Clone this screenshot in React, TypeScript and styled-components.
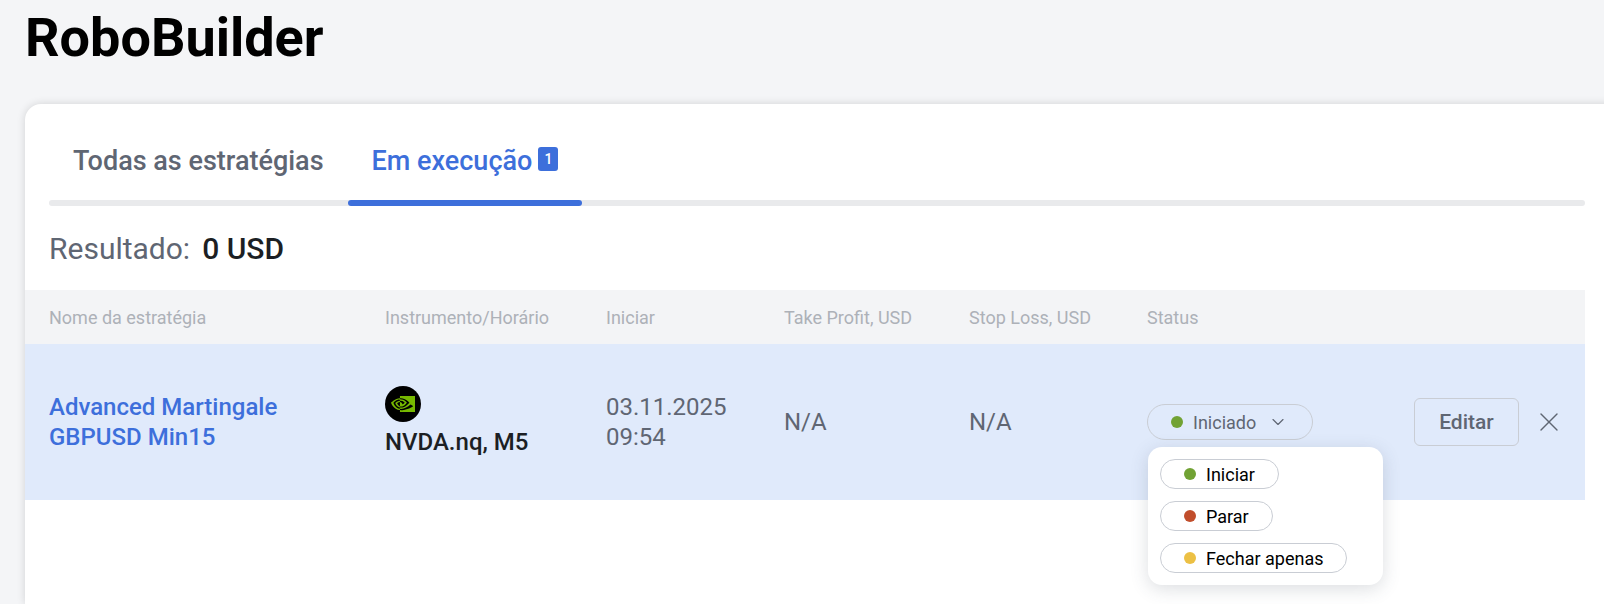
import React from 'react';
import styled, { createGlobalStyle } from 'styled-components';
import { FiChevronDown, FiX } from 'react-icons/fi';
import { SiNvidia } from 'react-icons/si';

const GlobalStyle = createGlobalStyle`
  html, body {
    margin: 0;
    padding: 0;
    width: 1604px;
    height: 604px;
    overflow: hidden;
    background: #f4f5f7;
    font-family: Roboto, "Liberation Sans", sans-serif;
  }
`;

const Page = styled.div`
  width: 1604px;
  height: 604px;
  padding-left: 25px;
  box-sizing: border-box;
  overflow: hidden;
`;

const PageTitle = styled.h1`
  margin: 0;
  height: 104px;
  font-size: 54px;
  line-height: 76px;
  font-weight: 700;
  color: #000;
`;

const Card = styled.div`
  width: 1640px;
  height: 500px;
  background: #fff;
  border-radius: 16px 0 0 0;
  box-shadow: 0 0 8px rgba(0, 0, 0, 0.14);
`;

const Content = styled.div`
  width: 1560px;
`;

const Tabs = styled.div`
  position: relative;
  display: flex;
  margin-left: 24px;
  height: 102px;

  &::after {
    content: '';
    position: absolute;
    left: 0;
    right: 0;
    bottom: 0;
    height: 6px;
    border-radius: 3px;
    background: #e9eaec;
  }
`;

const Tab = styled.div<{ $active?: boolean }>`
  position: relative;
  display: flex;
  align-items: center;
  height: 102px;
  padding: 12px 24px 0;
  box-sizing: border-box;
  font-size: 27px;
  font-weight: 500;
  color: ${({ $active }) => ($active ? '#3d6fdb' : '#5f6673')};

  &::after {
    content: '';
    display: ${({ $active }) => ($active ? 'block' : 'none')};
    position: absolute;
    left: 0;
    right: 0;
    bottom: 0;
    height: 6px;
    border-radius: 3px;
    background: #3d6fdb;
    z-index: 1;
  }
`;

const Count = styled.span`
  display: inline-flex;
  align-items: center;
  justify-content: center;
  width: 20px;
  height: 24px;
  margin: -4px 0 0 6px;
  border-radius: 3px;
  background: #3d6fdb;
  color: #fff;
  font-size: 14px;
`;

const Result = styled.div`
  display: flex;
  align-items: center;
  gap: 12px;
  height: 84px;
  padding-left: 24px;
  box-sizing: border-box;
  font-size: 30px;
  color: #5f6673;
`;

const ResultValue = styled.span`
  font-weight: 500;
  color: #1c1f24;
`;

const TableRow = styled.div`
  display: grid;
  grid-template-columns: 336px 221px 178px 185px 178px 267px 1fr;
  padding-left: 24px;
  align-items: center;
`;

const HeadRow = styled(TableRow)`
  height: 54px;
  background: #f3f4f6;
  font-size: 18px;
  color: #adb1b8;
`;

const BodyRow = styled(TableRow)`
  height: 156px;
  background: #e0eafb;
  font-size: 24px;
  color: #5f6673;
`;

const StrategyName = styled.div`
  font-size: 24px;
  font-weight: 500;
  line-height: 30px;
  color: #3d6fdb;
`;

const Instrument = styled.div`
  display: flex;
  flex-direction: column;
  gap: 6px;
  margin-bottom: 2px;
  font-size: 24px;
  line-height: 28px;
  font-weight: 500;
  color: #1c1f24;
`;

const LogoBadge = styled.div`
  display: flex;
  align-items: center;
  justify-content: center;
  width: 36px;
  height: 36px;
  border-radius: 50%;
  background: #000;
  color: #76b900;
`;

const DateCell = styled.div`
  line-height: 30px;
`;

const StatusCell = styled.div`
  position: relative;
`;

const StatusPill = styled.div`
  display: flex;
  align-items: center;
  width: 166px;
  height: 36px;
  padding-left: 23px;
  box-sizing: border-box;
  border: 1px solid #c9cdd4;
  border-radius: 18px;
  font-size: 18px;
  color: #5f6673;
`;

const Dot = styled.span<{ $color: string }>`
  width: 12px;
  height: 12px;
  border-radius: 50%;
  background: ${({ $color }) => $color};
  margin-right: 10px;
  flex: none;
`;

const Chevron = styled(FiChevronDown)`
  margin-left: 12px;
  color: #5f6673;
`;

const Menu = styled.div`
  position: absolute;
  top: 43px;
  left: 1px;
  width: 235px;
  height: 138px;
  padding: 12px;
  box-sizing: border-box;
  display: flex;
  flex-direction: column;
  align-items: flex-start;
  gap: 12px;
  background: #fff;
  border-radius: 14px;
  box-shadow: 0 4px 18px rgba(60, 70, 90, 0.18);
  z-index: 2;
`;

const MenuOption = styled.div`
  display: flex;
  align-items: center;
  height: 30px;
  padding: 0 23px;
  box-sizing: border-box;
  background: #fff;
  border: 1px solid #c9cdd4;
  border-radius: 15px;
  font-size: 18px;
  color: #000;
`;

const Actions = styled.div`
  display: flex;
  align-items: center;
`;

const EditButton = styled.button`
  width: 105px;
  height: 48px;
  background: transparent;
  border: 1px solid #c9cdd4;
  border-radius: 6px;
  font-family: inherit;
  font-size: 21px;
  font-weight: 500;
  color: #5f6673;
`;

const CloseIcon = styled(FiX)`
  margin-left: 14px;
  color: #5f6673;
`;

const options = [
  { label: 'Iniciar', color: '#71a234' },
  { label: 'Parar', color: '#c14e2c' },
  { label: 'Fechar apenas', color: '#ecc044' },
];

const App: React.FC = () => (
  <Page>
    <GlobalStyle />
    <PageTitle>RoboBuilder</PageTitle>
    <Card>
      <Content>
        <Tabs>
          <Tab>Todas as estratégias</Tab>
          <Tab $active>
            Em execução<Count>1</Count>
          </Tab>
        </Tabs>
        <Result>
          Resultado: <ResultValue>0 USD</ResultValue>
        </Result>
        <HeadRow>
          <div>Nome da estratégia</div>
          <div>Instrumento/Horário</div>
          <div>Iniciar</div>
          <div>Take Profit, USD</div>
          <div>Stop Loss, USD</div>
          <div>Status</div>
          <div />
        </HeadRow>
        <BodyRow>
          <StrategyName>
            Advanced Martingale
            <br />
            GBPUSD Min15
          </StrategyName>
          <Instrument>
            <LogoBadge>
              <SiNvidia size={24} />
            </LogoBadge>
            NVDA.nq, M5
          </Instrument>
          <DateCell>
            03.11.2025
            <br />
            09:54
          </DateCell>
          <div>N/A</div>
          <div>N/A</div>
          <StatusCell>
            <StatusPill>
              <Dot $color="#71a234" />
              Iniciado
              <Chevron size={20} strokeWidth={1.4} />
            </StatusPill>
            <Menu>
              {options.map((option) => (
                <MenuOption key={option.label}>
                  <Dot $color={option.color} />
                  {option.label}
                </MenuOption>
              ))}
            </Menu>
          </StatusCell>
          <Actions>
            <EditButton>Editar</EditButton>
            <CloseIcon size={32} strokeWidth={1} />
          </Actions>
        </BodyRow>
      </Content>
    </Card>
  </Page>
);

export default App;
